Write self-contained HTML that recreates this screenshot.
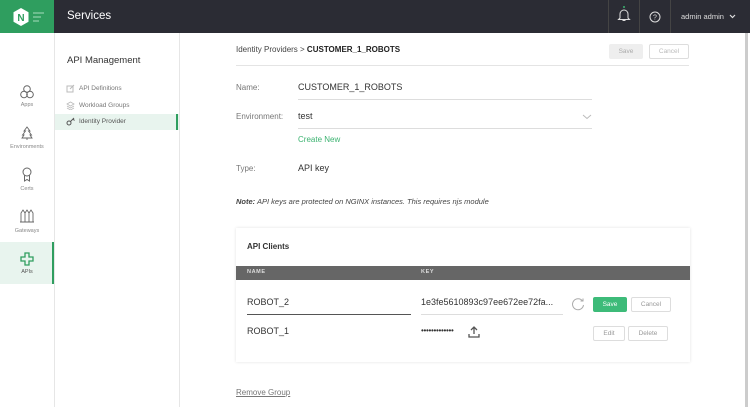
<!DOCTYPE html>
<html><head><meta charset="utf-8"><style>
*{box-sizing:border-box;margin:0;padding:0}
body{width:750px;height:407px;overflow:hidden;background:#fff;font-family:"Liberation Sans",sans-serif;position:relative;color:#333}
.a{position:absolute}
.t{position:absolute;white-space:nowrap}
.btn{position:absolute;border:1px solid #ddd;border-radius:2px;font-size:6.5px;color:#999;text-align:center;background:#fff}
</style></head><body>
<div class="a" style="left:0;top:0;width:750px;height:33px;background:#2b2c34"></div>
<div class="a" style="left:0;top:0;width:54px;height:33px;background:#2f9e5f"></div>
<svg class="a" style="left:12px;top:7px" width="34" height="20" viewBox="0 0 34 20"><polygon points="9,1 16.5,5.3 16.5,14.7 9,19 1.5,14.7 1.5,5.3" fill="#fff"/><text x="9" y="14" font-size="10" font-weight="bold" fill="#2f9e5f" text-anchor="middle" font-family="Liberation Sans">N</text><path d="M21 6h11M21 10h8M21 14h6" stroke="#8fd0aa" stroke-width="1.2"/></svg>
<div class="t" style="left:67px;top:10px;font-size:11.5px;color:#fff">Services</div>
<div class="a" style="left:608px;top:0;width:1px;height:33px;background:#444"></div>
<div class="a" style="left:639px;top:0;width:1px;height:33px;background:#444"></div>
<div class="a" style="left:670px;top:0;width:1px;height:33px;background:#444"></div>
<svg class="a" style="left:617px;top:5px" width="14" height="18" viewBox="0 0 14 18"><circle cx="7" cy="2" r="1" fill="#3cb371"/><path d="M3 13V9a4 4 0 0 1 8 0v4l1.5 1.5h-11Z M5.5 15.5h3" stroke="#ddd" fill="none" stroke-width="1"/></svg>
<svg class="a" style="left:649px;top:11px" width="12" height="12" viewBox="0 0 12 12"><circle cx="6" cy="6" r="5" stroke="#ddd" fill="none"/><text x="6" y="8.5" font-size="7" fill="#ddd" text-anchor="middle">?</text></svg>
<div class="t" style="left:681px;top:12px;font-size:7.5px;color:#ddd">admin admin</div>
<svg class="a" style="left:729px;top:14px" width="7" height="5"><path d="M1 1l2.5 2.5L6 1" stroke="#ddd" fill="none" stroke-width="1.2"/></svg>

<div class="a" style="left:54px;top:33px;width:1px;height:374px;background:#e6e6e6"></div>
<div class="a" style="left:179px;top:33px;width:1px;height:374px;background:#e6e6e6"></div>
<div class="a" style="left:0;top:242px;width:54px;height:42px;background:#e8f4ee"></div>
<div class="a" style="left:52px;top:242px;width:2px;height:42px;background:#2f9e5f"></div>
<svg class="a" style="left:19px;top:84px" width="16" height="16"><circle cx="8" cy="5" r="3.3" stroke="#666" fill="none"/><circle cx="5" cy="10.5" r="3.3" stroke="#666" fill="none"/><circle cx="11" cy="10.5" r="3.3" stroke="#666" fill="none"/></svg>
<div class="t" style="left:0;width:54px;text-align:center;top:102px;font-size:5.5px;color:#888">Apps</div>
<svg class="a" style="left:21px;top:126px" width="12" height="14"><path d="M6 1l3 4h-1.5l3 4h-1.5l2 3H1l2-3H1.5l3-4H3Z M6 12v2" stroke="#666" fill="none" stroke-width=".9"/></svg>
<div class="t" style="left:0;width:54px;text-align:center;top:144px;font-size:5.5px;color:#888">Environments</div>
<svg class="a" style="left:21px;top:167px" width="12" height="16"><circle cx="6" cy="5" r="4" stroke="#666" fill="none"/><path d="M3.5 8.5v5.5l2.5-1.5 2.5 1.5V8.5" stroke="#666" fill="none"/></svg>
<div class="t" style="left:0;width:54px;text-align:center;top:186px;font-size:5.5px;color:#888">Certs</div>
<svg class="a" style="left:19px;top:209px" width="16" height="14"><path d="M2 13V4l2-3 2 3v9M6 13V4l2-3 2 3v9M10 13V4l2-3 2 3v9M1 13h14" stroke="#666" fill="none" stroke-width=".9"/></svg>
<div class="t" style="left:0;width:54px;text-align:center;top:228px;font-size:5.5px;color:#888">Gateways</div>
<svg class="a" style="left:20px;top:252px" width="14" height="14"><path d="M5 1h4v4h4v4H9v4H5V9H1V5h4Z" stroke="#2f9e5f" fill="none" stroke-width="1.3"/></svg>
<div class="t" style="left:0;width:54px;text-align:center;top:269px;font-size:5.5px;color:#555">APIs</div>

<div class="t" style="left:67px;top:55px;font-size:9.5px;color:#333">API Management</div>
<svg class="a" style="left:66px;top:84px" width="9" height="9"><rect x="1" y="2" width="6" height="6" stroke="#bbb" fill="none"/><path d="M4 5l4-4" stroke="#bbb"/></svg>
<div class="t" style="left:79px;top:85px;font-size:6.5px;color:#777">API Definitions</div>
<svg class="a" style="left:66px;top:101px" width="9" height="9"><path d="M1 3l3.5-2L8 3 4.5 5Z M1 5l3.5 2L8 5M1 7l3.5 2L8 7" stroke="#bbb" fill="none" stroke-width=".8"/></svg>
<div class="t" style="left:79px;top:102px;font-size:6.5px;color:#777">Workload Groups</div>
<div class="a" style="left:55px;top:114px;width:124px;height:16px;background:#e8f4ee"></div>
<div class="a" style="left:176px;top:114px;width:2px;height:16px;background:#2f9e5f"></div>
<svg class="a" style="left:66px;top:117px" width="10" height="9"><circle cx="3" cy="6" r="2" stroke="#555" fill="none"/><path d="M4.5 4.5L8 1M7 2l1.5 1.5" stroke="#555"/></svg>
<div class="t" style="left:79px;top:118px;font-size:6.5px;color:#555">Identity Provider</div>

<div class="t" style="left:236px;top:45px;font-size:8px;color:#444">Identity Providers &gt; <b style="color:#222">CUSTOMER_1_ROBOTS</b></div>
<div class="btn" style="left:609px;top:44px;width:34px;height:15px;line-height:13px;background:#eee;border-color:#eee;color:#aaa">Save</div>
<div class="btn" style="left:649px;top:44px;width:40px;height:15px;line-height:13px;color:#bbb">Cancel</div>
<div class="a" style="left:236px;top:65px;width:453px;height:1px;background:#e4e4e4"></div>

<div class="t" style="left:236px;top:83px;font-size:8px;color:#777">Name:</div>
<div class="t" style="left:298px;top:82px;font-size:9px;color:#333">CUSTOMER_1_ROBOTS</div>
<div class="a" style="left:298px;top:99px;width:294px;height:1px;background:#ddd"></div>
<div class="t" style="left:236px;top:112px;font-size:8px;color:#777">Environment:</div>
<div class="t" style="left:298px;top:111px;font-size:9px;color:#333">test</div>
<svg class="a" style="left:582px;top:114px" width="10" height="6"><path d="M1 1l4 3.5L9 1" stroke="#bbb" fill="none"/></svg>
<div class="a" style="left:298px;top:128px;width:294px;height:1px;background:#ddd"></div>
<div class="t" style="left:298px;top:135px;font-size:8px;color:#3cb371">Create New</div>
<div class="t" style="left:236px;top:164px;font-size:8px;color:#777">Type:</div>
<div class="t" style="left:298px;top:163px;font-size:9px;color:#333">API key</div>
<div class="t" style="left:236px;top:197px;font-size:7.5px;color:#444;font-style:italic"><b>Note:</b> API keys are protected on NGINX instances. This requires njs module</div>

<div class="a" style="left:236px;top:228px;width:454px;height:134px;background:#fff;box-shadow:0 0 3px rgba(0,0,0,.12)"></div>
<div class="t" style="left:247px;top:242px;font-size:8px;color:#333;font-weight:bold">API Clients</div>
<div class="a" style="left:236px;top:266px;width:454px;height:14px;background:#666"></div>
<div class="t" style="left:247px;top:269px;font-size:5.5px;color:#ddd;font-weight:bold;letter-spacing:.6px">NAME</div>
<div class="t" style="left:421px;top:269px;font-size:5.5px;color:#ddd;font-weight:bold;letter-spacing:.6px">KEY</div>
<div class="t" style="left:247px;top:297px;font-size:9px;color:#333">ROBOT_2</div>
<div class="a" style="left:247px;top:314px;width:164px;height:1px;background:#555"></div>
<div class="t" style="left:421px;top:297px;font-size:9px;color:#333">1e3fe5610893c97ee672ee72fa...</div>
<div class="a" style="left:421px;top:314px;width:142px;height:1px;background:#ddd"></div>
<svg class="a" style="left:571px;top:297px" width="14" height="14"><path d="M11.5 4A5.5 5.5 0 1 0 12.5 8" stroke="#aaa" fill="none"/><path d="M9.5 4h2.5V1.5" stroke="#aaa" fill="none"/></svg>
<div class="btn" style="left:593px;top:297px;width:34px;height:15px;line-height:13px;background:#3dbb79;border-color:#3dbb79;color:#fff">Save</div>
<div class="btn" style="left:631px;top:297px;width:40px;height:15px;line-height:13px">Cancel</div>
<div class="t" style="left:247px;top:326px;font-size:9px;color:#333">ROBOT_1</div>
<div class="t" style="left:421px;top:326px;font-size:8px;color:#333;letter-spacing:-.3px">•••••••••••••</div>
<svg class="a" style="left:468px;top:326px" width="12" height="12"><path d="M6 1v7M3 4l3-3 3 3M1 8v3h10V8" stroke="#555" fill="none" stroke-width="1.3"/></svg>
<div class="btn" style="left:593px;top:326px;width:32px;height:15px;line-height:13px">Edit</div>
<div class="btn" style="left:628px;top:326px;width:40px;height:15px;line-height:13px">Delete</div>

<div class="t" style="left:236px;top:388px;font-size:8px;color:#777;text-decoration:underline">Remove Group</div>
<div class="a" style="left:745px;top:33px;width:3px;height:374px;background:#ccc"></div>
</body></html>
